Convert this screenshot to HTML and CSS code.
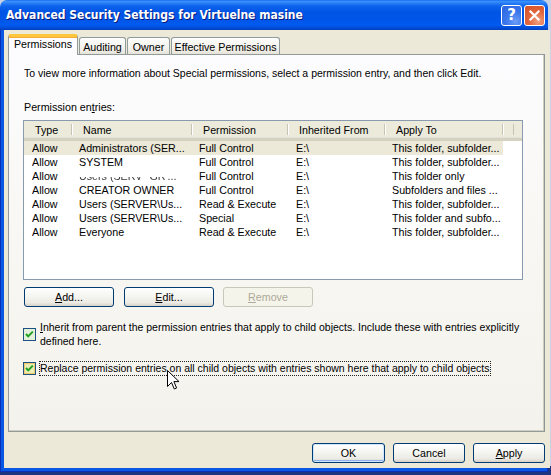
FILE: index.html
```html
<!DOCTYPE html>
<html>
<head>
<meta charset="utf-8">
<title>Advanced Security Settings</title>
<link rel="stylesheet" href="styles.css">
</head>
<body>
<div class="window">
  <div class="titlebar">
    <span class="title">Advanced Security Settings for Virtuelne masine</span>
    <div class="caption-btns">
      <span class="cap-btn help">?</span>
      <span class="cap-btn close"><svg width="13" height="13" viewBox="0 0 13 13"><path d="M2.5 2.5 L10.5 10.5 M10.5 2.5 L2.5 10.5" stroke="#fff" stroke-width="2.2" stroke-linecap="square"/></svg></span>
    </div>
  </div>
  <div class="frame">
    <div class="client">
      <div class="tabs">
        <div class="tab active">Permissions</div>
        <div class="tab t-aud">Auditing</div>
        <div class="tab t-own">Owner</div>
        <div class="tab t-eff">Effective Permissions</div>
      </div>
      <div class="panel">
        <p class="intro">To view more information about Special permissions, select a permission entry, and then click Edit.</p>
        <div class="label">Permission en<u>t</u>ries:</div>
        <div class="list">
          <div class="list-head">
            <div class="hc">Type</div>
            <div class="hc">Name</div>
            <div class="hc">Permission</div>
            <div class="hc">Inherited From</div>
            <div class="hc">Apply To</div>
            <div class="hc hc-small"></div>
            <div class="hc hc-rest"></div>
          </div>
          <div class="row sel"><span>Allow</span><span>Administrators (SER...</span><span>Full Control</span><span>E:\</span><span>This folder, subfolder...</span></div>
          <div class="row"><span>Allow</span><span>SYSTEM</span><span>Full Control</span><span>E:\</span><span>This folder, subfolder...</span></div>
          <div class="row"><span>Allow</span><span><span class="smudged">Users (SERV ''GR'...</span></span><span>Full Control</span><span>E:\</span><span>This folder only</span></div>
          <div class="row"><span>Allow</span><span>CREATOR OWNER</span><span>Full Control</span><span>E:\</span><span>Subfolders and files ...</span></div>
          <div class="row"><span>Allow</span><span>Users (SERVER\Us...</span><span>Read &amp; Execute</span><span>E:\</span><span>This folder, subfolder...</span></div>
          <div class="row"><span>Allow</span><span>Users (SERVER\Us...</span><span>Special</span><span>E:\</span><span>This folder and subfo...</span></div>
          <div class="row"><span>Allow</span><span>Everyone</span><span>Read &amp; Execute</span><span>E:\</span><span>This folder, subfolder...</span></div>
        </div>
        <div class="btn-row">
          <div class="btn"><span><u>A</u>dd...</span></div>
          <div class="btn"><span><u>E</u>dit...</span></div>
          <div class="btn disabled"><span><u>R</u>emove</span></div>
        </div>
        <div class="check multi">
          <svg class="cb" width="13" height="13" viewBox="0 0 13 13">
            <rect x="0.5" y="0.5" width="12" height="12" fill="#e4f1da" stroke="#1c5180"/>
            <polyline points="3,6 5.2,8.4 9.8,3.6" fill="none" stroke="#21a121" stroke-width="2"/>
          </svg>
          <span class="ctext"><u>I</u>nherit from parent the permission entries that apply to child objects. Include these with entries explicitly defined here.</span>
        </div>
        <div class="check focus">
          <svg class="cb" width="13" height="13" viewBox="0 0 13 13">
            <rect x="0.5" y="0.5" width="12" height="12" fill="#e9eeb4" stroke="#1c5180"/>
            <rect x="1.5" y="1.5" width="10" height="10" fill="none" stroke="#f2c86a" stroke-width="1"/>
            <polyline points="3,6 5.2,8.4 9.8,3.6" fill="none" stroke="#21a121" stroke-width="2"/>
          </svg>
          <span class="ctext">Replace permission entries on all child objects with entries shown here that apply to child objects</span>
        </div>
      </div>
      <div class="footer">
        <div class="btn default ok"><span>OK</span></div>
        <div class="btn"><span>Cancel</span></div>
        <div class="btn"><span><u>A</u>pply</span></div>
      </div>
    </div>
  </div>
</div>
<svg class="cursor" width="13" height="21" viewBox="0 0 13 21">
  <path d="M0.5 0.5 L0.5 16.5 L4.5 12.5 L7.3 19 L9.6 18 L6.9 11.6 L12 11.6 Z" fill="#fff" stroke="#000" stroke-width="1" stroke-linejoin="miter"/>
</svg>
</body>
</html>
```
FILE: styles.css
```css
* { box-sizing: border-box; }
html, body { margin: 0; padding: 0; }
body {
  width: 551px;
  height: 475px;
  overflow: hidden;
  position: relative;
  background: linear-gradient(to bottom, #c9d2e3 0%, #c9d2e3 98%, #1d3580 98%);
  font-family: "Liberation Sans", Arial, sans-serif;
  font-size: 10.7px;
  color: #000;
}
u { text-decoration: underline; text-underline-offset: 1px; }

.window {
  width: 548px;
  height: 472px;
  display: flex;
  flex-direction: column;
}
.titlebar {
  height: 30px;
  flex: none;
  border-radius: 7px 7px 0 0;
  background: linear-gradient(to bottom, #0a5ee9 0px, #3d95ff 1px, #2b80f7 3px, #0d63ec 6px, #0055e5 12px, #0056e8 20px, #005bf0 25px, #004bd6 28px, #0040bb 30px);
  display: flex;
  align-items: center;
  justify-content: space-between;
  padding: 0 3px 0 6px;
}
.title {
  color: #fff;
  font-family: "DejaVu Sans Condensed", "Liberation Sans", sans-serif;
  font-weight: bold;
  font-size: 12px;
  text-shadow: 1px 1px 0 #0a1a7a;
}
.caption-btns { display: flex; gap: 2px; }
.cap-btn {
  width: 21px;
  height: 21px;
  border: 1px solid #fff;
  border-radius: 3px;
  display: flex;
  align-items: center;
  justify-content: center;
  color: #fff;
  font-family: "DejaVu Sans", sans-serif;
  font-weight: bold;
  font-size: 15px;
}
.help {
  background: radial-gradient(circle at 70% 80%, #6b9df7 0%, #3c78ec 45%, #2a63df 100%);
}
.close {
  background: radial-gradient(circle at 70% 80%, #f0a280 0%, #e0673f 45%, #d44d24 100%);
}

.frame {
  flex: 1;
  display: flex;
  padding: 0 4px 4px 4px;
  background: #0a57e3;
  box-shadow: inset 1px 0 0 #0831b8, inset -1px 0 0 #0831b8, inset 0 -1px 0 #0831b8;
}
.client {
  flex: 1;
  background: #ece9d8;
  display: flex;
  flex-direction: column;
  padding: 4px 5px 0 4px;
}

/* Tabs */
.tabs {
  display: flex;
  align-items: flex-end;
  height: 21px;
  margin-bottom: -1px;
  position: relative;
  z-index: 1;
  gap: 1px;
}
.tab {
  height: 17px;
  margin-bottom: 1px;
  border: 1px solid #919b9c;
  border-bottom: none;
  border-radius: 3px 3px 0 0;
  background: linear-gradient(to bottom, #fefefe, #f1f0ea 70%, #e6e4d8);
  padding-top: 3px;
  line-height: 13px;
  text-align: center;
  white-space: nowrap;
}
.tab.active {
  width: 70px;
  height: 21px;
  margin-bottom: 0;
  border-top: 3px solid #ffc83c;
  box-shadow: inset 0 1px 0 #f9a93a;
  background: #fcfcfe;
  padding-top: 1px;
}
.t-aud { width: 47px; }
.t-own { width: 43px; }
.t-eff { width: 109px; }

/* Panel */
.panel {
  height: 378px;
  flex: none;
  border: 1px solid #919b9c;
  border-right-color: #8c9495;
  background: linear-gradient(to bottom, #fcfcfe 0%, #f8f7f3 50%, #f3f2ec 100%);
  box-shadow: inset -1px -1px 0 #d0cebf;
  padding: 12px 15px 0 15px;
  display: flex;
  flex-direction: column;
}
.intro {
  margin: 0;
  line-height: 13px;
  white-space: nowrap;
  font-size: 10.5px;
}
.label {
  margin-top: 21px;
  line-height: 13px;
}
.list {
  margin-top: 6px;
  margin-left: -1px;
  width: 500px;
  height: 160px;
  border: 1px solid #8a9aae;
  background: #fff;
  flex: none;
}
.list-head {
  display: grid;
  grid-template-columns: 48px 120px 96px 97px 118px 2px 1fr;
  height: 20px;
  background: #ebeadb;
  border-bottom: 3px solid #d6d2c2;
  box-shadow: 0 -1px 0 #e2e2da inset;
}
.hc {
  padding: 2px 0 0 11px;
  line-height: 15px;
  white-space: nowrap;
  background: linear-gradient(#c7c5b2, #c7c5b2) right 3px / 1px 11px no-repeat,
              linear-gradient(#fff, #fff) 0 3px / 1px 11px no-repeat;
}
.hc:first-child { background: linear-gradient(#c7c5b2, #c7c5b2) right 3px / 1px 11px no-repeat; }
.hc-rest { background: none; }

.row {
  display: grid;
  grid-template-columns: 48px 120px 96px 97px 118px;
  width: 479px;
  height: 14px;
  line-height: 14px;
  white-space: nowrap;
}
.row > span { padding-left: 7px; overflow: hidden; }
.row > span:first-child { padding-left: 8px; }
.row > span:nth-child(4) { padding-left: 8px; }
.row.sel { background: #ece9d8; }
.smudged {
  background: linear-gradient(to bottom, #fff 0%, #fff 58%, #333 58%);
  -webkit-background-clip: text;
  background-clip: text;
  color: transparent;
}

/* Buttons */
.btn-row {
  display: flex;
  gap: 10px;
  margin-top: 7px;
}
.btn-row .btn:nth-child(3) { margin-left: -1px; }
.btn {
  width: 90px;
  height: 20px;
  border: 1px solid #003c74;
  border-radius: 3px;
  background: linear-gradient(to bottom, #ffffff 0%, #f5f5f1 45%, #ecebe5 80%, #d8d3c8 100%);
  display: flex;
  align-items: center;
  justify-content: center;
  line-height: 13px;
}
.btn.disabled {
  border-color: #c9c7ba;
  color: #aca899;
  background: #f5f4ea;
}
.btn.default {
  box-shadow: inset 0 0 0 1px #cee7ff, inset 0 -1px 0 1px #8fb0ea;
}

/* Checkboxes */
.check {
  display: flex;
  align-items: center;
  margin-left: -1px;
  font-size: 10.5px;
}
.check .cb { flex: none; }
.check .ctext { margin-left: 3px; }
.check.multi {
  margin-top: 13px;
  line-height: 14px;
}
.check.multi .ctext { padding-left: 1px; width: 490px; }
.check.focus {
  margin-top: 13px;
  line-height: 13px;
}
.check.focus .ctext {
  border: 1px dotted #222;
  padding: 0 1px 0 0;
}

/* Footer */
.footer {
  display: flex;
  justify-content: flex-end;
  gap: 8px;
  margin-top: 11px;
}
.footer .btn { width: 72px; }
.footer .ok { width: 73px; }

.cursor {
  position: absolute;
  left: 167px;
  top: 370px;
}
```
